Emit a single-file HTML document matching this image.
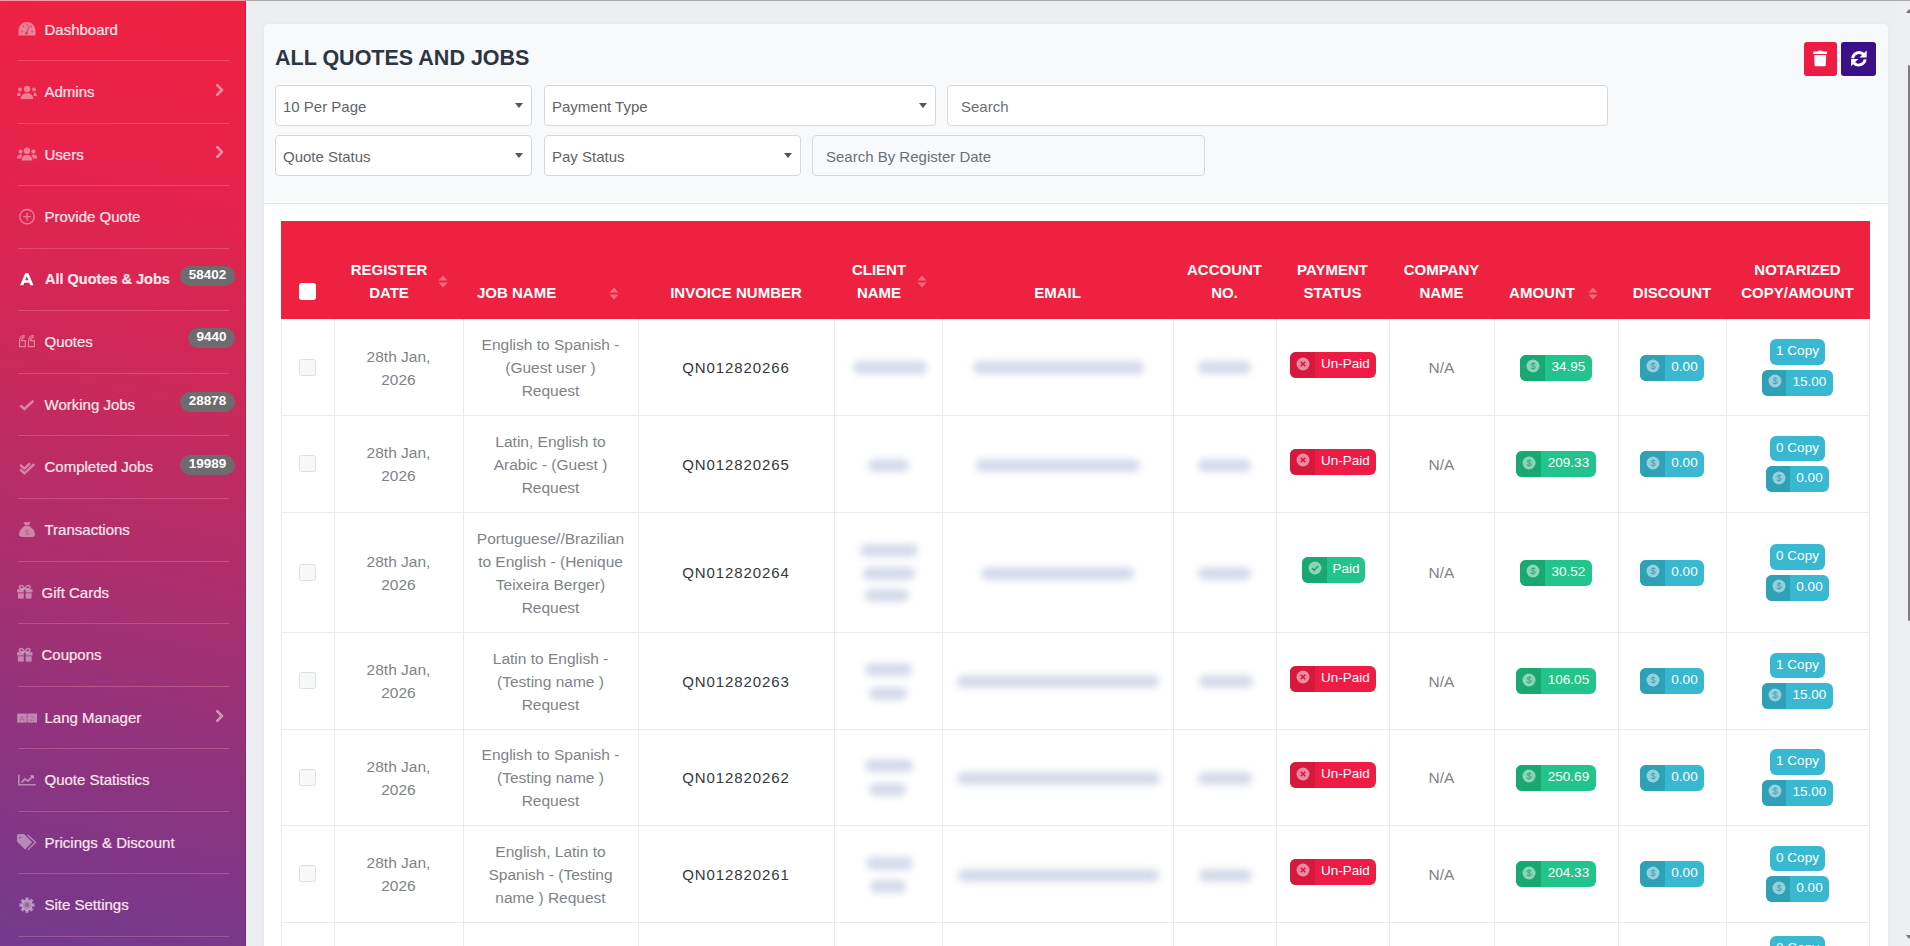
<!DOCTYPE html><html><head><meta charset="utf-8"><style>
*{box-sizing:border-box;margin:0;padding:0}
html,body{width:1910px;height:946px;overflow:hidden}
body{font-family:"Liberation Sans",sans-serif;background:#eceef1;position:relative}
.abs{position:absolute}
.topline{position:absolute;left:246px;top:0;width:1664px;height:1px;background:#a9a9ab}
#sb{position:absolute;left:0;top:0;width:246px;height:946px;overflow:hidden;
 background:linear-gradient(192deg,#ef2140 0%,#e8224a 18%,#cf2858 38%,#b42d69 55%,#983279 72%,#823686 88%,#733a8d 100%)}
#sb .tl{position:absolute;left:0;top:0;width:246px;height:1px;background:#f59aa8}
#sb .rl{position:absolute;left:245px;top:0;width:1px;height:946px;background:rgba(60,0,40,.18)}
.sep{position:absolute;left:18px;width:211px;height:1px;background:rgba(255,170,190,.28)}
.st{position:absolute;left:45px;color:#ffe6ec;-webkit-text-stroke:.2px #ffe6ec;font-size:15px;white-space:nowrap;line-height:20px;height:20px}
.si{position:absolute;left:17px;width:20px;height:20px}
.chev{position:absolute;left:214px;width:10px;height:14px}
.bdg{position:absolute;left:180px;width:55px;height:20px;border-radius:10px;background:#6e6b6e;color:#fff;font-weight:bold;font-size:13.5px;text-align:center;line-height:18px}
#card{position:absolute;left:264px;top:24px;width:1624px;height:940px;background:#fff;border-radius:5px;box-shadow:0 0 5px rgba(0,0,0,.04)}
#ctop{position:absolute;left:0;top:0;width:100%;height:180px;background:#f8f9fb;border-bottom:1px solid #e5e7eb;border-radius:5px 5px 0 0}
h1{position:absolute;left:11px;top:22px;font-size:21.5px;font-weight:bold;color:#2d3543;white-space:nowrap}
.sel{position:absolute;height:41px;background:#fff;border:1px solid #d5d9de;border-radius:4px;font-size:15px;color:#5f6469;padding-left:7px;line-height:42.5px;white-space:nowrap}
.car{position:absolute;right:8px;top:17px;width:0;height:0;border-left:4px solid transparent;border-right:4px solid transparent;border-top:5px solid #555}
.btn{position:absolute;top:18px;width:34px;height:34px;border-radius:3px}
.th{position:absolute;color:#fff;font-weight:bold;font-size:15px;line-height:23px;text-align:center;white-space:nowrap}
.sort{position:absolute;width:10px;height:13px}
.cell{position:absolute;font-size:15.5px;line-height:23px;text-align:center;color:#7f8388;white-space:nowrap}
.inv{color:#35383c;letter-spacing:.9px;font-size:15px}
.cb{position:absolute;left:299px;width:17px;height:17px;border:1px solid #dcdfe2;background:#f7f8f9;border-radius:2.5px}
.blob{position:absolute;height:13px;border-radius:6px;background:#d6dbea;filter:blur(3.5px)}
.bg2{position:absolute;height:25px;border-radius:6px;color:#fff;font-size:13.5px;overflow:hidden;white-space:nowrap}
.bg2 .l{position:absolute;left:0;top:0;bottom:0}
.bg2 .t{position:absolute;top:0;line-height:24px}
.bg2 svg{position:absolute}
.vl{position:absolute;width:1px;background:#e8eaed}
.hl{position:absolute;height:1px;background:#e8eaed}
</style></head><body>
<div class="topline"></div>
<div id="sb"><div class="tl"></div><div class="rl"></div>
<div class="st" style="left:44.5px;top:19.5px;">Dashboard</div>
<div class="si" style="left:17px;top:20.3px"><svg viewBox="0 0 20 20"><path d="M1.5 15.5 V10.5 A8.5 8.5 0 0 1 18.5 10.5 V15.5 Z" fill="rgba(255,255,255,.42)"/><g fill="rgba(120,20,60,.35)"><circle cx="5" cy="11.5" r="1"/><circle cx="6.3" cy="6.5" r="1"/><circle cx="10" cy="4.8" r="1"/><circle cx="14" cy="6.5" r="1"/><circle cx="15.2" cy="11.5" r="1"/></g><path d="M9.5 13.5 L12.2 6" stroke="rgba(120,20,60,.35)" stroke-width="1.3"/><circle cx="9.5" cy="13.3" r="1.6" fill="rgba(120,20,60,.35)"/></svg></div>
<div class="sep" style="top:60.0px"></div>
<div class="st" style="left:44.5px;top:82.1px;">Admins</div>
<div class="si" style="left:17px;top:82.9px"><svg viewBox="0 0 20 20"><circle cx="10" cy="6" r="3.2" fill="rgba(255,255,255,.42)"/><path d="M3.8 15.9 Q3.8 10.3 10 10.3 Q16.2 10.3 16.2 15.9 Z" fill="rgba(255,255,255,.42)"/><circle cx="3" cy="6.5" r="1.9" fill="rgba(255,255,255,.42)"/><circle cx="17" cy="6.5" r="1.9" fill="rgba(255,255,255,.42)"/><path d="M0 13 Q0 9.5 3 9.5 L3.5 13Z M20 13 Q20 9.5 17 9.5 L16.5 13Z" fill="rgba(255,255,255,.42)"/></svg></div>
<div class="chev" style="top:82.9px"><svg viewBox="0 0 10 14"><path d="M3.2 2.2 L8 7 L3.2 11.8" fill="none" stroke="#fff" stroke-width="2.6" stroke-linecap="round" stroke-linejoin="round" opacity=".5"/></svg></div>
<div class="sep" style="top:122.6px"></div>
<div class="st" style="left:44.5px;top:144.6px;">Users</div>
<div class="si" style="left:17px;top:145.4px"><svg viewBox="0 0 20 20"><circle cx="10" cy="5.8" r="3.2" fill="rgba(255,255,255,.42)"/><path d="M4.6 15.6 Q4.6 10 10 10 Q15.4 10 15.4 15.6 Z" fill="rgba(255,255,255,.42)"/><circle cx="3.6" cy="6.6" r="2.1" fill="rgba(255,255,255,.42)"/><circle cx="16.4" cy="6.6" r="2.1" fill="rgba(255,255,255,.42)"/><path d="M-0.4 13.6 Q-0.4 9.6 3.6 9.6 Q4.8 9.6 5.4 10.4 Q4 11.8 4 13.6Z M20.4 13.6 Q20.4 9.6 16.4 9.6 Q15.2 9.6 14.6 10.4 Q16 11.8 16 13.6Z" fill="rgba(255,255,255,.42)"/></svg></div>
<div class="chev" style="top:145.4px"><svg viewBox="0 0 10 14"><path d="M3.2 2.2 L8 7 L3.2 11.8" fill="none" stroke="#fff" stroke-width="2.6" stroke-linecap="round" stroke-linejoin="round" opacity=".5"/></svg></div>
<div class="sep" style="top:185.1px"></div>
<div class="st" style="left:44.5px;top:207.2px;">Provide Quote</div>
<div class="si" style="left:17px;top:208.0px"><svg viewBox="0 0 20 20"><circle cx="10" cy="8.7" r="7.2" fill="none" stroke="rgba(255,255,255,.42)" stroke-width="1.3"/><path d="M10 5 V12.4 M6.3 8.7 H13.7" stroke="rgba(255,255,255,.42)" stroke-width="1.3"/></svg></div>
<div class="sep" style="top:247.7px"></div>
<div class="st" style="left:45px;top:269.7px;font-weight:bold;font-size:14.5px;margin-top:-0.7px;">All Quotes &amp; Jobs</div>
<div class="si" style="left:17px;top:270.5px"><svg viewBox="0 0 20 20"><path d="M3.1 14.3 L8.2 2.2 H11.4 L16.5 14.3 H13.3 L12.3 11.7 H7.3 L6.3 14.3 Z M8.2 9.2 H11.4 L9.8 5 Z" fill="#fff"/></svg></div>
<div class="bdg" style="top:265.9px;left:180px;width:55px">58402</div>
<div class="sep" style="top:310.3px"></div>
<div class="st" style="left:44.5px;top:332.3px;">Quotes</div>
<div class="si" style="left:17px;top:333.1px"><svg viewBox="0 0 20 20"><path d="M2.5 13.6 V8.5 Q2.5 3 7 2.5 V4.3 Q4.6 5 4.5 7.6 H8.3 V13.6 Z M11.5 13.6 V8.5 Q11.5 3 16 2.5 V4.3 Q13.6 5 13.5 7.6 H17.4 V13.6 Z" fill="none" stroke="rgba(255,255,255,.42)" stroke-width="1.2"/></svg></div>
<div class="bdg" style="top:328px;left:188px;width:47px">9440</div>
<div class="sep" style="top:372.9px"></div>
<div class="st" style="left:44.5px;top:394.9px;">Working Jobs</div>
<div class="si" style="left:17px;top:395.7px"><svg viewBox="0 0 20 20"><path d="M3.4 9.6 L7.4 13 L16.4 4.8" fill="none" stroke="rgba(255,255,255,.42)" stroke-width="2.6"/></svg></div>
<div class="bdg" style="top:391.5px;left:180px;width:55px">28878</div>
<div class="sep" style="top:435.4px"></div>
<div class="st" style="left:44.5px;top:457.4px;">Completed Jobs</div>
<div class="si" style="left:17px;top:458.2px"><svg viewBox="0 0 20 20"><path d="M3.2 11.5 L7.4 15.3 L17.2 6.2" fill="none" stroke="rgba(255,255,255,.42)" stroke-width="2.4"/><path d="M3.2 6.8 L7.4 10.6 L13 5.4" fill="none" stroke="rgba(255,255,255,.42)" stroke-width="2.4"/></svg></div>
<div class="bdg" style="top:454.5px;left:180px;width:55px">19989</div>
<div class="sep" style="top:498.0px"></div>
<div class="st" style="left:44.5px;top:520.0px;">Transactions</div>
<div class="si" style="left:17px;top:520.8px"><svg viewBox="0 0 20 20"><path d="M6.5 1.3 H13.5 L12 4.3 H8 Z" fill="rgba(255,255,255,.42)"/><path d="M7.8 5 H12.2 Q18 9 18 13 Q18 16 14.5 16 H5.5 Q2 16 2 13 Q2 9 7.8 5Z" fill="rgba(255,255,255,.42)"/><text x="10" y="13.8" font-size="7.5" text-anchor="middle" fill="rgba(120,20,60,.35)" font-family="Liberation Sans">$</text></svg></div>
<div class="sep" style="top:560.6px"></div>
<div class="st" style="left:41.5px;top:582.5px;">Gift Cards</div>
<div class="si" style="left:17px;top:583.3px"><svg viewBox="0 0 20 20"><path d="M7.6 6 Q2.5 6 2.5 4.2 Q2.5 2.3 4.6 2.5 Q6.5 2.8 7.6 6Z M7.9 6 Q13 6 13 4.2 Q13 2.3 10.9 2.5 Q9 2.8 7.9 6Z" fill="none" stroke="rgba(255,255,255,.42)" stroke-width="1.6"/><rect x="-0.1" y="6.2" width="6.9" height="3.3" fill="rgba(255,255,255,.42)"/><rect x="8.7" y="6.2" width="6.8" height="3.3" fill="rgba(255,255,255,.42)"/><rect x="0.9" y="10.3" width="5.9" height="5.3" fill="rgba(255,255,255,.42)"/><rect x="8.7" y="10.3" width="5.9" height="5.3" fill="rgba(255,255,255,.42)"/></svg></div>
<div class="sep" style="top:623.1px"></div>
<div class="st" style="left:41.5px;top:645.1px;">Coupons</div>
<div class="si" style="left:17px;top:645.9px"><svg viewBox="0 0 20 20"><path d="M7.6 6 Q2.5 6 2.5 4.2 Q2.5 2.3 4.6 2.5 Q6.5 2.8 7.6 6Z M7.9 6 Q13 6 13 4.2 Q13 2.3 10.9 2.5 Q9 2.8 7.9 6Z" fill="none" stroke="rgba(255,255,255,.42)" stroke-width="1.6"/><rect x="-0.1" y="6.2" width="6.9" height="3.3" fill="rgba(255,255,255,.42)"/><rect x="8.7" y="6.2" width="6.8" height="3.3" fill="rgba(255,255,255,.42)"/><rect x="0.9" y="10.3" width="5.9" height="5.3" fill="rgba(255,255,255,.42)"/><rect x="8.7" y="10.3" width="5.9" height="5.3" fill="rgba(255,255,255,.42)"/></svg></div>
<div class="sep" style="top:685.7px"></div>
<div class="st" style="left:44.5px;top:707.7px;">Lang Manager</div>
<div class="si" style="left:17px;top:708.5px"><svg viewBox="0 0 20 20"><rect x="0.2" y="4.6" width="9.6" height="9" fill="rgba(255,255,255,.42)"/><rect x="10.4" y="4.6" width="9.6" height="9" fill="rgba(255,255,255,.42)"/><text x="5" y="12.3" font-size="8" text-anchor="middle" fill="rgba(120,20,60,.35)" font-family="Liberation Sans">A</text><text x="15.2" y="12.3" font-size="8" text-anchor="middle" fill="rgba(120,20,60,.35)" font-family="Liberation Sans">2</text></svg></div>
<div class="chev" style="top:708.5px"><svg viewBox="0 0 10 14"><path d="M3.2 2.2 L8 7 L3.2 11.8" fill="none" stroke="#fff" stroke-width="2.6" stroke-linecap="round" stroke-linejoin="round" opacity=".5"/></svg></div>
<div class="sep" style="top:748.3px"></div>
<div class="st" style="left:44.5px;top:770.2px;">Quote Statistics</div>
<div class="si" style="left:17px;top:771.0px"><svg viewBox="0 0 20 20"><path d="M1.8 3.8 V13.7 H18.8" fill="none" stroke="rgba(255,255,255,.42)" stroke-width="1.6"/><path d="M4.5 11.5 L8 8 L11 10 L15.5 5.5" fill="none" stroke="rgba(255,255,255,.42)" stroke-width="1.8"/><path d="M13 4.2 H17 V8.2Z" fill="rgba(255,255,255,.42)"/></svg></div>
<div class="sep" style="top:810.8px"></div>
<div class="st" style="left:44.5px;top:832.8px;">Pricings &amp; Discount</div>
<div class="si" style="left:17px;top:833.6px"><svg viewBox="0 0 20 20"><path d="M-0.2 2.5 Q-0.2 0 2.3 0 H7 L15.2 8.2 L8 15.4 L-0.2 7.2 Z" fill="rgba(255,255,255,.42)"/><circle cx="3.2" cy="3.6" r="1.2" fill="rgba(120,20,60,.35)"/><path d="M10.5 1 L18.6 8.2 L11 15.8" fill="none" stroke="rgba(255,255,255,.42)" stroke-width="1.3"/></svg></div>
<div class="sep" style="top:873.4px"></div>
<div class="st" style="left:44.5px;top:895.3px;">Site Settings</div>
<div class="si" style="left:17px;top:896.1px"><svg viewBox="0 0 20 20"><g transform="translate(10 9.1)"><circle r="5.6" fill="rgba(255,255,255,.42)"/><g fill="rgba(255,255,255,.42)"><rect x="-1.6" y="-7.7" width="3.2" height="3"/><rect x="-1.6" y="4.7" width="3.2" height="3"/><rect x="-7.7" y="-1.6" width="3" height="3.2"/><rect x="4.7" y="-1.6" width="3" height="3.2"/><rect x="-1.6" y="-7.7" width="3.2" height="3" transform="rotate(45)"/><rect x="-1.6" y="4.7" width="3.2" height="3" transform="rotate(45)"/><rect x="-7.7" y="-1.6" width="3" height="3.2" transform="rotate(45)"/><rect x="4.7" y="-1.6" width="3" height="3.2" transform="rotate(45)"/></g><circle r="2.3" fill="rgba(120,20,60,.35)"/></g></svg></div>
<div class="sep" style="top:936.0px"></div>
</div>
<div id="card"><div id="ctop">
  <h1>ALL QUOTES AND JOBS</h1>
  <div class="sel" style="left:11px;top:61px;width:257px">10 Per Page<div class="car"></div></div>
  <div class="sel" style="left:280px;top:61px;width:392px">Payment Type<div class="car"></div></div>
  <div class="sel" style="left:683px;top:61px;width:661px;padding-left:13px;color:#6b7076">Search</div>
  <div class="sel" style="left:11px;top:111px;width:257px">Quote Status<div class="car"></div></div>
  <div class="sel" style="left:280px;top:111px;width:257px">Pay Status<div class="car"></div></div>
  <div class="sel" style="left:548px;top:111px;width:393px;padding-left:13px;background:#f8f9fb;color:#6b7076">Search By Register Date</div>
  <div class="btn" style="left:1540px;width:33px;background:#ee1b44"><svg width="33" height="34" viewBox="0 0 33 34"><path d="M9.3 9.6 H13.6 L14.4 8.6 H18 L18.8 9.6 H23.1 V12 H9.3Z" fill="#fff"/><path d="M10.2 12.9 H22.2 L21.8 23.2 Q21.7 24.2 20.7 24.2 H11.7 Q10.7 24.2 10.6 23.2Z" fill="#fff"/></svg></div>
  <div class="btn" style="left:1577px;width:35px;background:#3b0f86"><svg width="35" height="34" viewBox="0 0 35 34"><path d="M11.6 16.2 A6.6 6.6 0 0 1 22.9 12.6" fill="none" stroke="#fff" stroke-width="2.9"/><path d="M25.7 8.4 V15.6 H18.5Z" fill="#fff"/><path d="M24.2 17.4 A6.6 6.6 0 0 1 12.9 21" fill="none" stroke="#fff" stroke-width="2.9"/><path d="M10.1 24.2 V17 H17.3Z" fill="#fff"/></svg></div>
</div></div>
<div class="abs" style="left:281px;top:221px;width:1589px;height:98px;background:#ee2240"></div>
<div class="abs" style="left:299px;top:282.5px;width:17px;height:17px;background:#fff;border-radius:3px"></div>
<div class="th" style="left:334px;width:110px;top:257.5px">REGISTER<br>DATE</div>
<div class="th" style="left:477px;top:280.5px;text-align:left">JOB NAME</div>
<div class="th" style="left:638px;width:196px;top:280.5px">INVOICE NUMBER</div>
<div class="th" style="left:834px;width:90px;top:257.5px">CLIENT<br>NAME</div>
<div class="th" style="left:942px;width:231px;top:280.5px">EMAIL</div>
<div class="th" style="left:1173px;width:103px;top:257.5px">ACCOUNT<br>NO.</div>
<div class="th" style="left:1276px;width:113px;top:257.5px">PAYMENT<br>STATUS</div>
<div class="th" style="left:1389px;width:105px;top:257.5px">COMPANY<br>NAME</div>
<div class="th" style="left:1494px;width:96px;top:280.5px">AMOUNT</div>
<div class="th" style="left:1618px;width:108px;top:280.5px">DISCOUNT</div>
<div class="th" style="left:1726px;width:143px;top:257.5px">NOTARIZED<br>COPY/AMOUNT</div>
<div class="sort" style="left:437.5px;top:274px"><svg viewBox="0 0 10 13" width="10" height="13"><path d="M5 0.5 L9.5 5.5 H0.5Z M5 12.5 L9.5 7.5 H0.5Z" fill="rgba(255,255,255,.32)"/></svg></div>
<div class="sort" style="left:609px;top:286px"><svg viewBox="0 0 10 13" width="10" height="13"><path d="M5 0.5 L9.5 5.5 H0.5Z M5 12.5 L9.5 7.5 H0.5Z" fill="rgba(255,255,255,.32)"/></svg></div>
<div class="sort" style="left:917px;top:274px"><svg viewBox="0 0 10 13" width="10" height="13"><path d="M5 0.5 L9.5 5.5 H0.5Z M5 12.5 L9.5 7.5 H0.5Z" fill="rgba(255,255,255,.32)"/></svg></div>
<div class="sort" style="left:1588px;top:286px"><svg viewBox="0 0 10 13" width="10" height="13"><path d="M5 0.5 L9.5 5.5 H0.5Z M5 12.5 L9.5 7.5 H0.5Z" fill="rgba(255,255,255,.32)"/></svg></div>
<div class="vl" style="left:281px;top:319px;height:627px"></div>
<div class="vl" style="left:334px;top:319px;height:627px"></div>
<div class="vl" style="left:463px;top:319px;height:627px"></div>
<div class="vl" style="left:638px;top:319px;height:627px"></div>
<div class="vl" style="left:834px;top:319px;height:627px"></div>
<div class="vl" style="left:942px;top:319px;height:627px"></div>
<div class="vl" style="left:1173px;top:319px;height:627px"></div>
<div class="vl" style="left:1276px;top:319px;height:627px"></div>
<div class="vl" style="left:1389px;top:319px;height:627px"></div>
<div class="vl" style="left:1494px;top:319px;height:627px"></div>
<div class="vl" style="left:1618px;top:319px;height:627px"></div>
<div class="vl" style="left:1726px;top:319px;height:627px"></div>
<div class="vl" style="left:1869px;top:319px;height:627px"></div>
<div class="hl" style="left:281px;top:415.0px;width:1589px"></div>
<div class="hl" style="left:281px;top:512.0px;width:1589px"></div>
<div class="hl" style="left:281px;top:632.0px;width:1589px"></div>
<div class="hl" style="left:281px;top:729.0px;width:1589px"></div>
<div class="hl" style="left:281px;top:825.0px;width:1589px"></div>
<div class="hl" style="left:281px;top:922.0px;width:1589px"></div>
<div class="cb" style="top:358.5px"></div>
<div class="cell" style="left:334px;width:129px;top:344.5px">28th Jan,<br>2026</div>
<div class="cell" style="left:463px;width:175px;top:333.0px">English to Spanish -<br>(Guest user )<br>Request</div>
<div class="cell inv" style="left:638px;width:196px;top:356.0px">QN012820266</div>
<div class="blob" style="left:853px;width:74px;top:360.5px"></div>
<div class="blob" style="left:973px;width:171px;top:360.5px"></div>
<div class="blob" style="left:1198px;width:53px;top:360.5px"></div>
<div class="cell" style="left:1389px;width:105px;top:356.0px">N/A</div>
<div class="bg2" style="left:1290px;top:352.1px;width:86px;height:26px;background:#ee1b45"><div class="l" style="width:25px;background:#d6183d"></div><svg width="14" height="14" viewBox="0 0 14 14" style="left:6.0px;top:4.5px"><circle cx="7" cy="7" r="6.5" fill="rgba(255,255,255,.5)"/><path d="M4.7 4.7 L9.3 9.3 M9.3 4.7 L4.7 9.3" stroke="#d6183d" stroke-width="1.6"/></svg><div class="t" style="left:25px;right:0;text-align:center;line-height:23.5px">Un-Paid</div></div>
<div class="bg2" style="left:1520px;top:354.6px;width:72px;height:26px;background:#22c48b"><div class="l" style="width:25px;background:#1aa872"></div><svg width="14" height="14" viewBox="0 0 14 14" style="left:6.0px;top:4.5px"><circle cx="7" cy="7" r="6.5" fill="rgba(255,255,255,.5)"/><text x="7" y="10.2" font-size="9" text-anchor="middle" fill="#1aa872" font-family="Liberation Sans" >$</text></svg><div class="t" style="left:25px;right:0;text-align:center;line-height:23.5px">34.95</div></div>
<div class="bg2" style="left:1640px;top:354.6px;width:64px;height:26px;background:#39b9d1"><div class="l" style="width:25px;background:#2ea1b7"></div><svg width="14" height="14" viewBox="0 0 14 14" style="left:6.0px;top:4.5px"><circle cx="7" cy="7" r="6.5" fill="rgba(255,255,255,.5)"/><text x="7" y="10.2" font-size="9" text-anchor="middle" fill="#2ea1b7" font-family="Liberation Sans" >$</text></svg><div class="t" style="left:25px;right:0;text-align:center;line-height:23.5px">0.00</div></div>
<div class="bg2" style="left:1770px;top:339.0px;width:55px;height:25.5px;background:#39b9d1;text-align:center;line-height:24px">1 Copy</div>
<div class="bg2" style="left:1762px;top:369.7px;width:71px;height:26px;background:#39b9d1"><div class="l" style="width:24px;background:#2ea1b7"></div><svg width="14" height="14" viewBox="0 0 14 14" style="left:5.5px;top:4.5px"><circle cx="7" cy="7" r="6.5" fill="rgba(255,255,255,.5)"/><text x="7" y="10.2" font-size="9" text-anchor="middle" fill="#2ea1b7" font-family="Liberation Sans" >$</text></svg><div class="t" style="left:24px;right:0;text-align:center;line-height:23.5px">15.00</div></div>
<div class="cb" style="top:455.0px"></div>
<div class="cell" style="left:334px;width:129px;top:441.0px">28th Jan,<br>2026</div>
<div class="cell" style="left:463px;width:175px;top:429.5px">Latin, English to<br>Arabic - (Guest )<br>Request</div>
<div class="cell inv" style="left:638px;width:196px;top:452.5px">QN012820265</div>
<div class="blob" style="left:868px;width:41px;top:458.5px"></div>
<div class="blob" style="left:976px;width:164px;top:458.5px"></div>
<div class="blob" style="left:1198px;width:53px;top:458.5px"></div>
<div class="cell" style="left:1389px;width:105px;top:452.5px">N/A</div>
<div class="bg2" style="left:1290px;top:448.6px;width:86px;height:26px;background:#ee1b45"><div class="l" style="width:25px;background:#d6183d"></div><svg width="14" height="14" viewBox="0 0 14 14" style="left:6.0px;top:4.5px"><circle cx="7" cy="7" r="6.5" fill="rgba(255,255,255,.5)"/><path d="M4.7 4.7 L9.3 9.3 M9.3 4.7 L4.7 9.3" stroke="#d6183d" stroke-width="1.6"/></svg><div class="t" style="left:25px;right:0;text-align:center;line-height:23.5px">Un-Paid</div></div>
<div class="bg2" style="left:1516px;top:451.1px;width:80px;height:26px;background:#22c48b"><div class="l" style="width:25px;background:#1aa872"></div><svg width="14" height="14" viewBox="0 0 14 14" style="left:6.0px;top:4.5px"><circle cx="7" cy="7" r="6.5" fill="rgba(255,255,255,.5)"/><text x="7" y="10.2" font-size="9" text-anchor="middle" fill="#1aa872" font-family="Liberation Sans" >$</text></svg><div class="t" style="left:25px;right:0;text-align:center;line-height:23.5px">209.33</div></div>
<div class="bg2" style="left:1640px;top:451.1px;width:64px;height:26px;background:#39b9d1"><div class="l" style="width:25px;background:#2ea1b7"></div><svg width="14" height="14" viewBox="0 0 14 14" style="left:6.0px;top:4.5px"><circle cx="7" cy="7" r="6.5" fill="rgba(255,255,255,.5)"/><text x="7" y="10.2" font-size="9" text-anchor="middle" fill="#2ea1b7" font-family="Liberation Sans" >$</text></svg><div class="t" style="left:25px;right:0;text-align:center;line-height:23.5px">0.00</div></div>
<div class="bg2" style="left:1770px;top:435.5px;width:55px;height:25.5px;background:#39b9d1;text-align:center;line-height:24px">0 Copy</div>
<div class="bg2" style="left:1766px;top:466.2px;width:63px;height:26px;background:#39b9d1"><div class="l" style="width:24px;background:#2ea1b7"></div><svg width="14" height="14" viewBox="0 0 14 14" style="left:5.5px;top:4.5px"><circle cx="7" cy="7" r="6.5" fill="rgba(255,255,255,.5)"/><text x="7" y="10.2" font-size="9" text-anchor="middle" fill="#2ea1b7" font-family="Liberation Sans" >$</text></svg><div class="t" style="left:24px;right:0;text-align:center;line-height:23.5px">0.00</div></div>
<div class="cb" style="top:563.5px"></div>
<div class="cell" style="left:334px;width:129px;top:549.5px">28th Jan,<br>2026</div>
<div class="cell" style="left:463px;width:175px;top:526.5px">Portuguese//Brazilian<br>to English - (Henique<br>Teixeira Berger)<br>Request</div>
<div class="cell inv" style="left:638px;width:196px;top:561.0px">QN012820264</div>
<div class="blob" style="left:860px;width:58px;top:543.5px"></div>
<div class="blob" style="left:863px;width:52px;top:566.5px"></div>
<div class="blob" style="left:865px;width:44px;top:588.5px"></div>
<div class="blob" style="left:981px;width:153px;top:566.5px"></div>
<div class="blob" style="left:1198px;width:53px;top:566.5px"></div>
<div class="cell" style="left:1389px;width:105px;top:561.0px">N/A</div>
<div class="bg2" style="left:1302px;top:556.8px;width:63px;height:26px;background:#22c48b"><div class="l" style="width:25px;background:#1aa872"></div><svg width="14" height="14" viewBox="0 0 14 14" style="left:6.0px;top:4.5px"><circle cx="7" cy="7" r="6.5" fill="rgba(255,255,255,.5)"/><path d="M4 7.2 L6.2 9.3 L10.2 5" fill="none" stroke="#1aa872" stroke-width="1.6"/></svg><div class="t" style="left:25px;right:0;text-align:center;line-height:23.5px">Paid</div></div>
<div class="bg2" style="left:1520px;top:559.6px;width:72px;height:26px;background:#22c48b"><div class="l" style="width:25px;background:#1aa872"></div><svg width="14" height="14" viewBox="0 0 14 14" style="left:6.0px;top:4.5px"><circle cx="7" cy="7" r="6.5" fill="rgba(255,255,255,.5)"/><text x="7" y="10.2" font-size="9" text-anchor="middle" fill="#1aa872" font-family="Liberation Sans" >$</text></svg><div class="t" style="left:25px;right:0;text-align:center;line-height:23.5px">30.52</div></div>
<div class="bg2" style="left:1640px;top:559.6px;width:64px;height:26px;background:#39b9d1"><div class="l" style="width:25px;background:#2ea1b7"></div><svg width="14" height="14" viewBox="0 0 14 14" style="left:6.0px;top:4.5px"><circle cx="7" cy="7" r="6.5" fill="rgba(255,255,255,.5)"/><text x="7" y="10.2" font-size="9" text-anchor="middle" fill="#2ea1b7" font-family="Liberation Sans" >$</text></svg><div class="t" style="left:25px;right:0;text-align:center;line-height:23.5px">0.00</div></div>
<div class="bg2" style="left:1770px;top:544.0px;width:55px;height:25.5px;background:#39b9d1;text-align:center;line-height:24px">0 Copy</div>
<div class="bg2" style="left:1766px;top:574.7px;width:63px;height:26px;background:#39b9d1"><div class="l" style="width:24px;background:#2ea1b7"></div><svg width="14" height="14" viewBox="0 0 14 14" style="left:5.5px;top:4.5px"><circle cx="7" cy="7" r="6.5" fill="rgba(255,255,255,.5)"/><text x="7" y="10.2" font-size="9" text-anchor="middle" fill="#2ea1b7" font-family="Liberation Sans" >$</text></svg><div class="t" style="left:24px;right:0;text-align:center;line-height:23.5px">0.00</div></div>
<div class="cb" style="top:672.0px"></div>
<div class="cell" style="left:334px;width:129px;top:658.0px">28th Jan,<br>2026</div>
<div class="cell" style="left:463px;width:175px;top:646.5px">Latin to English -<br>(Testing name )<br>Request</div>
<div class="cell inv" style="left:638px;width:196px;top:669.5px">QN012820263</div>
<div class="blob" style="left:865px;width:47px;top:662.5px"></div>
<div class="blob" style="left:869px;width:38px;top:686.5px"></div>
<div class="blob" style="left:957px;width:202px;top:674.5px"></div>
<div class="blob" style="left:1199px;width:54px;top:674.5px"></div>
<div class="cell" style="left:1389px;width:105px;top:669.5px">N/A</div>
<div class="bg2" style="left:1290px;top:665.6px;width:86px;height:26px;background:#ee1b45"><div class="l" style="width:25px;background:#d6183d"></div><svg width="14" height="14" viewBox="0 0 14 14" style="left:6.0px;top:4.5px"><circle cx="7" cy="7" r="6.5" fill="rgba(255,255,255,.5)"/><path d="M4.7 4.7 L9.3 9.3 M9.3 4.7 L4.7 9.3" stroke="#d6183d" stroke-width="1.6"/></svg><div class="t" style="left:25px;right:0;text-align:center;line-height:23.5px">Un-Paid</div></div>
<div class="bg2" style="left:1516px;top:668.1px;width:80px;height:26px;background:#22c48b"><div class="l" style="width:25px;background:#1aa872"></div><svg width="14" height="14" viewBox="0 0 14 14" style="left:6.0px;top:4.5px"><circle cx="7" cy="7" r="6.5" fill="rgba(255,255,255,.5)"/><text x="7" y="10.2" font-size="9" text-anchor="middle" fill="#1aa872" font-family="Liberation Sans" >$</text></svg><div class="t" style="left:25px;right:0;text-align:center;line-height:23.5px">106.05</div></div>
<div class="bg2" style="left:1640px;top:668.1px;width:64px;height:26px;background:#39b9d1"><div class="l" style="width:25px;background:#2ea1b7"></div><svg width="14" height="14" viewBox="0 0 14 14" style="left:6.0px;top:4.5px"><circle cx="7" cy="7" r="6.5" fill="rgba(255,255,255,.5)"/><text x="7" y="10.2" font-size="9" text-anchor="middle" fill="#2ea1b7" font-family="Liberation Sans" >$</text></svg><div class="t" style="left:25px;right:0;text-align:center;line-height:23.5px">0.00</div></div>
<div class="bg2" style="left:1770px;top:652.5px;width:55px;height:25.5px;background:#39b9d1;text-align:center;line-height:24px">1 Copy</div>
<div class="bg2" style="left:1762px;top:683.2px;width:71px;height:26px;background:#39b9d1"><div class="l" style="width:24px;background:#2ea1b7"></div><svg width="14" height="14" viewBox="0 0 14 14" style="left:5.5px;top:4.5px"><circle cx="7" cy="7" r="6.5" fill="rgba(255,255,255,.5)"/><text x="7" y="10.2" font-size="9" text-anchor="middle" fill="#2ea1b7" font-family="Liberation Sans" >$</text></svg><div class="t" style="left:24px;right:0;text-align:center;line-height:23.5px">15.00</div></div>
<div class="cb" style="top:768.5px"></div>
<div class="cell" style="left:334px;width:129px;top:754.5px">28th Jan,<br>2026</div>
<div class="cell" style="left:463px;width:175px;top:743.0px">English to Spanish -<br>(Testing name )<br>Request</div>
<div class="cell inv" style="left:638px;width:196px;top:766.0px">QN012820262</div>
<div class="blob" style="left:865px;width:48px;top:759.0px"></div>
<div class="blob" style="left:869px;width:37px;top:782.5px"></div>
<div class="blob" style="left:957px;width:203px;top:771.5px"></div>
<div class="blob" style="left:1198px;width:54px;top:771.5px"></div>
<div class="cell" style="left:1389px;width:105px;top:766.0px">N/A</div>
<div class="bg2" style="left:1290px;top:762.1px;width:86px;height:26px;background:#ee1b45"><div class="l" style="width:25px;background:#d6183d"></div><svg width="14" height="14" viewBox="0 0 14 14" style="left:6.0px;top:4.5px"><circle cx="7" cy="7" r="6.5" fill="rgba(255,255,255,.5)"/><path d="M4.7 4.7 L9.3 9.3 M9.3 4.7 L4.7 9.3" stroke="#d6183d" stroke-width="1.6"/></svg><div class="t" style="left:25px;right:0;text-align:center;line-height:23.5px">Un-Paid</div></div>
<div class="bg2" style="left:1516px;top:764.6px;width:80px;height:26px;background:#22c48b"><div class="l" style="width:25px;background:#1aa872"></div><svg width="14" height="14" viewBox="0 0 14 14" style="left:6.0px;top:4.5px"><circle cx="7" cy="7" r="6.5" fill="rgba(255,255,255,.5)"/><text x="7" y="10.2" font-size="9" text-anchor="middle" fill="#1aa872" font-family="Liberation Sans" >$</text></svg><div class="t" style="left:25px;right:0;text-align:center;line-height:23.5px">250.69</div></div>
<div class="bg2" style="left:1640px;top:764.6px;width:64px;height:26px;background:#39b9d1"><div class="l" style="width:25px;background:#2ea1b7"></div><svg width="14" height="14" viewBox="0 0 14 14" style="left:6.0px;top:4.5px"><circle cx="7" cy="7" r="6.5" fill="rgba(255,255,255,.5)"/><text x="7" y="10.2" font-size="9" text-anchor="middle" fill="#2ea1b7" font-family="Liberation Sans" >$</text></svg><div class="t" style="left:25px;right:0;text-align:center;line-height:23.5px">0.00</div></div>
<div class="bg2" style="left:1770px;top:749.0px;width:55px;height:25.5px;background:#39b9d1;text-align:center;line-height:24px">1 Copy</div>
<div class="bg2" style="left:1762px;top:779.7px;width:71px;height:26px;background:#39b9d1"><div class="l" style="width:24px;background:#2ea1b7"></div><svg width="14" height="14" viewBox="0 0 14 14" style="left:5.5px;top:4.5px"><circle cx="7" cy="7" r="6.5" fill="rgba(255,255,255,.5)"/><text x="7" y="10.2" font-size="9" text-anchor="middle" fill="#2ea1b7" font-family="Liberation Sans" >$</text></svg><div class="t" style="left:24px;right:0;text-align:center;line-height:23.5px">15.00</div></div>
<div class="cb" style="top:865.0px"></div>
<div class="cell" style="left:334px;width:129px;top:851.0px">28th Jan,<br>2026</div>
<div class="cell" style="left:463px;width:175px;top:839.5px">English, Latin to<br>Spanish - (Testing<br>name ) Request</div>
<div class="cell inv" style="left:638px;width:196px;top:862.5px">QN012820261</div>
<div class="blob" style="left:866px;width:47px;top:856.5px"></div>
<div class="blob" style="left:870px;width:36px;top:879.5px"></div>
<div class="blob" style="left:958px;width:201px;top:868.5px"></div>
<div class="blob" style="left:1199px;width:53px;top:868.5px"></div>
<div class="cell" style="left:1389px;width:105px;top:862.5px">N/A</div>
<div class="bg2" style="left:1290px;top:858.6px;width:86px;height:26px;background:#ee1b45"><div class="l" style="width:25px;background:#d6183d"></div><svg width="14" height="14" viewBox="0 0 14 14" style="left:6.0px;top:4.5px"><circle cx="7" cy="7" r="6.5" fill="rgba(255,255,255,.5)"/><path d="M4.7 4.7 L9.3 9.3 M9.3 4.7 L4.7 9.3" stroke="#d6183d" stroke-width="1.6"/></svg><div class="t" style="left:25px;right:0;text-align:center;line-height:23.5px">Un-Paid</div></div>
<div class="bg2" style="left:1516px;top:861.1px;width:80px;height:26px;background:#22c48b"><div class="l" style="width:25px;background:#1aa872"></div><svg width="14" height="14" viewBox="0 0 14 14" style="left:6.0px;top:4.5px"><circle cx="7" cy="7" r="6.5" fill="rgba(255,255,255,.5)"/><text x="7" y="10.2" font-size="9" text-anchor="middle" fill="#1aa872" font-family="Liberation Sans" >$</text></svg><div class="t" style="left:25px;right:0;text-align:center;line-height:23.5px">204.33</div></div>
<div class="bg2" style="left:1640px;top:861.1px;width:64px;height:26px;background:#39b9d1"><div class="l" style="width:25px;background:#2ea1b7"></div><svg width="14" height="14" viewBox="0 0 14 14" style="left:6.0px;top:4.5px"><circle cx="7" cy="7" r="6.5" fill="rgba(255,255,255,.5)"/><text x="7" y="10.2" font-size="9" text-anchor="middle" fill="#2ea1b7" font-family="Liberation Sans" >$</text></svg><div class="t" style="left:25px;right:0;text-align:center;line-height:23.5px">0.00</div></div>
<div class="bg2" style="left:1770px;top:845.5px;width:55px;height:25.5px;background:#39b9d1;text-align:center;line-height:24px">0 Copy</div>
<div class="bg2" style="left:1766px;top:876.2px;width:63px;height:26px;background:#39b9d1"><div class="l" style="width:24px;background:#2ea1b7"></div><svg width="14" height="14" viewBox="0 0 14 14" style="left:5.5px;top:4.5px"><circle cx="7" cy="7" r="6.5" fill="rgba(255,255,255,.5)"/><text x="7" y="10.2" font-size="9" text-anchor="middle" fill="#2ea1b7" font-family="Liberation Sans" >$</text></svg><div class="t" style="left:24px;right:0;text-align:center;line-height:23.5px">0.00</div></div>
<div class="cb" style="top:955.9px"></div>
<div class="bg2" style="left:1770px;top:936.0px;width:55px;height:25.5px;background:#39b9d1;text-align:center;line-height:24px">0 Copy</div>
<div class="abs" style="left:1894px;top:1px;width:16px;height:945px;background:#eeeff1"></div>
<div class="abs" style="left:1908px;top:65px;width:2px;height:556px;background:#7d7d80;border-radius:2px"></div>
<div class="abs" style="left:1906px;top:9px;width:0;height:0;border-left:3px solid transparent;border-right:3px solid transparent;border-bottom:4px solid #777"></div>
<div class="abs" style="left:1906px;top:935px;width:0;height:0;border-left:3px solid transparent;border-right:3px solid transparent;border-top:4px solid #777"></div>
</body></html>
